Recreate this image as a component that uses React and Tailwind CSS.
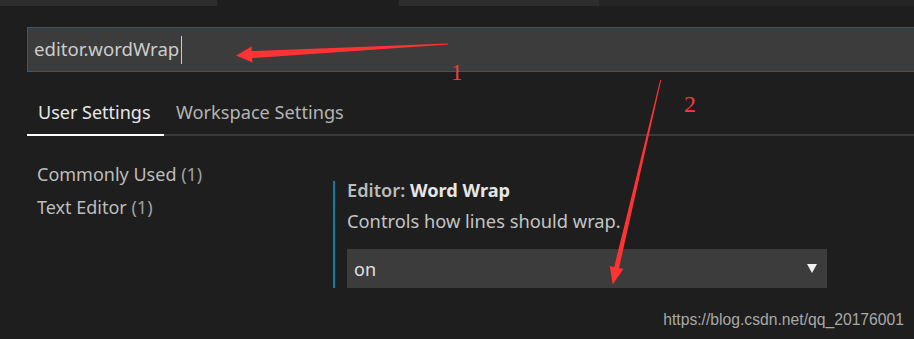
import React from "react";

const ui = { fontFamily: '"Noto Sans", "Open Sans", sans-serif' };

export default function App() {
  return (
    <div
      className="relative w-[914px] h-[339px] overflow-hidden bg-[#1e1e1e] text-[#cccccc]"
      style={ui}
    >
      {/* top editor tabs strip */}
      <div className="flex h-[6px]">
        <div className="w-[217px] bg-[#2d2d2d]" />
        <div className="w-[182px] bg-[#1e1e1e]" />
        <div className="w-[200px] bg-[#2d2d2d]" />
        <div className="flex-1 bg-[#252526]" />
      </div>

      {/* search box */}
      <div className="ml-[27px] mt-[21px] flex h-[45px] items-center border border-r-0 border-[#0e639c] bg-[#3c3c3c] pl-[6px]">
        <span className="text-[18.6px] leading-none text-[#cccccc]">editor.wordWrap</span>
        <span className="ml-[2px] h-[28px] w-px bg-[#cccccc]" />
      </div>

      {/* tabs */}
      <div className="ml-[27px] mt-[28px] flex">
        <div className="flex h-[36px] w-[137px] items-start border-b-2 border-white pl-[11px]">
          <span className="text-[18px] leading-[24px] text-[#e8e8e8]">User Settings</span>
        </div>
        <div className="flex h-[36px] flex-1 items-start border-b-2 border-[#3a3a3a] pl-[12px]">
          <span className="text-[18.2px] leading-[24px] text-[#b4b4b4]">Workspace Settings</span>
        </div>
      </div>

      {/* body */}
      <div className="flex">
        <div className="ml-[37px] mt-[22px] w-[296px] flex flex-col text-[18px] leading-[33px] text-[#bdbdbd]">
          <span>
            Commonly Used <span className="text-[#a0a0a0]">(1)</span>
          </span>
          <span>
            Text Editor <span className="text-[#a0a0a0]">(1)</span>
          </span>
        </div>

        <div className="mt-[45px] flex h-[107px] border-l-2 border-[#0c7d9d] pl-[12px]">
          <div className="flex flex-col">
            <div className="text-[18.2px] leading-[18px]">
              <span className="font-semibold text-[#bbbbbb]">Editor: </span>
              <span className="font-bold text-[#e6e6e6]">Word Wrap</span>
            </div>
            <div className="mt-[11px] text-[18.3px] leading-[22px] text-[#c4c4c4]">
              Controls how lines should wrap.
            </div>
            <div className="mt-[17px] flex h-[39px] w-[480px] items-center justify-between bg-[#3c3c3c] pl-[7px] pr-[10px]">
              <span className="text-[18px] leading-none text-[#e0e0e0]">on</span>
              <svg width="10" height="9" viewBox="0 0 10 9">
                <polygon points="0,0 10,0 5,9" fill="#f0f0f0" />
              </svg>
            </div>
          </div>
        </div>
      </div>

      {/* watermark */}
      <div
        className="absolute right-[10px] top-[310px] text-[15.7px] leading-[20px] text-[#a8a8a8]"
        style={{ fontFamily: '"Liberation Sans", Arial, sans-serif' }}
      >
        https://blog.csdn.net/qq_20176001
      </div>

      {/* annotations */}
      <svg
        className="pointer-events-none absolute left-0 top-0"
        width="914"
        height="339"
        viewBox="0 0 914 339"
      >
        <polygon
          points="448,43.5 448,44.5 252.2,58.1 252.4,62.6 236,55.5 251.6,46.6 251.8,51.1"
          fill="#ff3333"
        />
        <polygon
          points="660.2,79.9 661.2,80.1 619,268.1 623.4,269.1 612.7,284.5 609.8,265.9 614.2,266.9"
          fill="#ff3333"
        />
      </svg>
      <span
        className="absolute left-[451px] top-[60px] text-[23px] leading-[26px] text-[#f03c3c]"
        style={{ fontFamily: '"Liberation Serif", serif' }}
      >
        1
      </span>
      <span
        className="absolute left-[684px] top-[91px] text-[24px] leading-[26px] text-[#f03c3c]"
        style={{ fontFamily: '"Liberation Serif", serif' }}
      >
        2
      </span>
    </div>
  );
}
